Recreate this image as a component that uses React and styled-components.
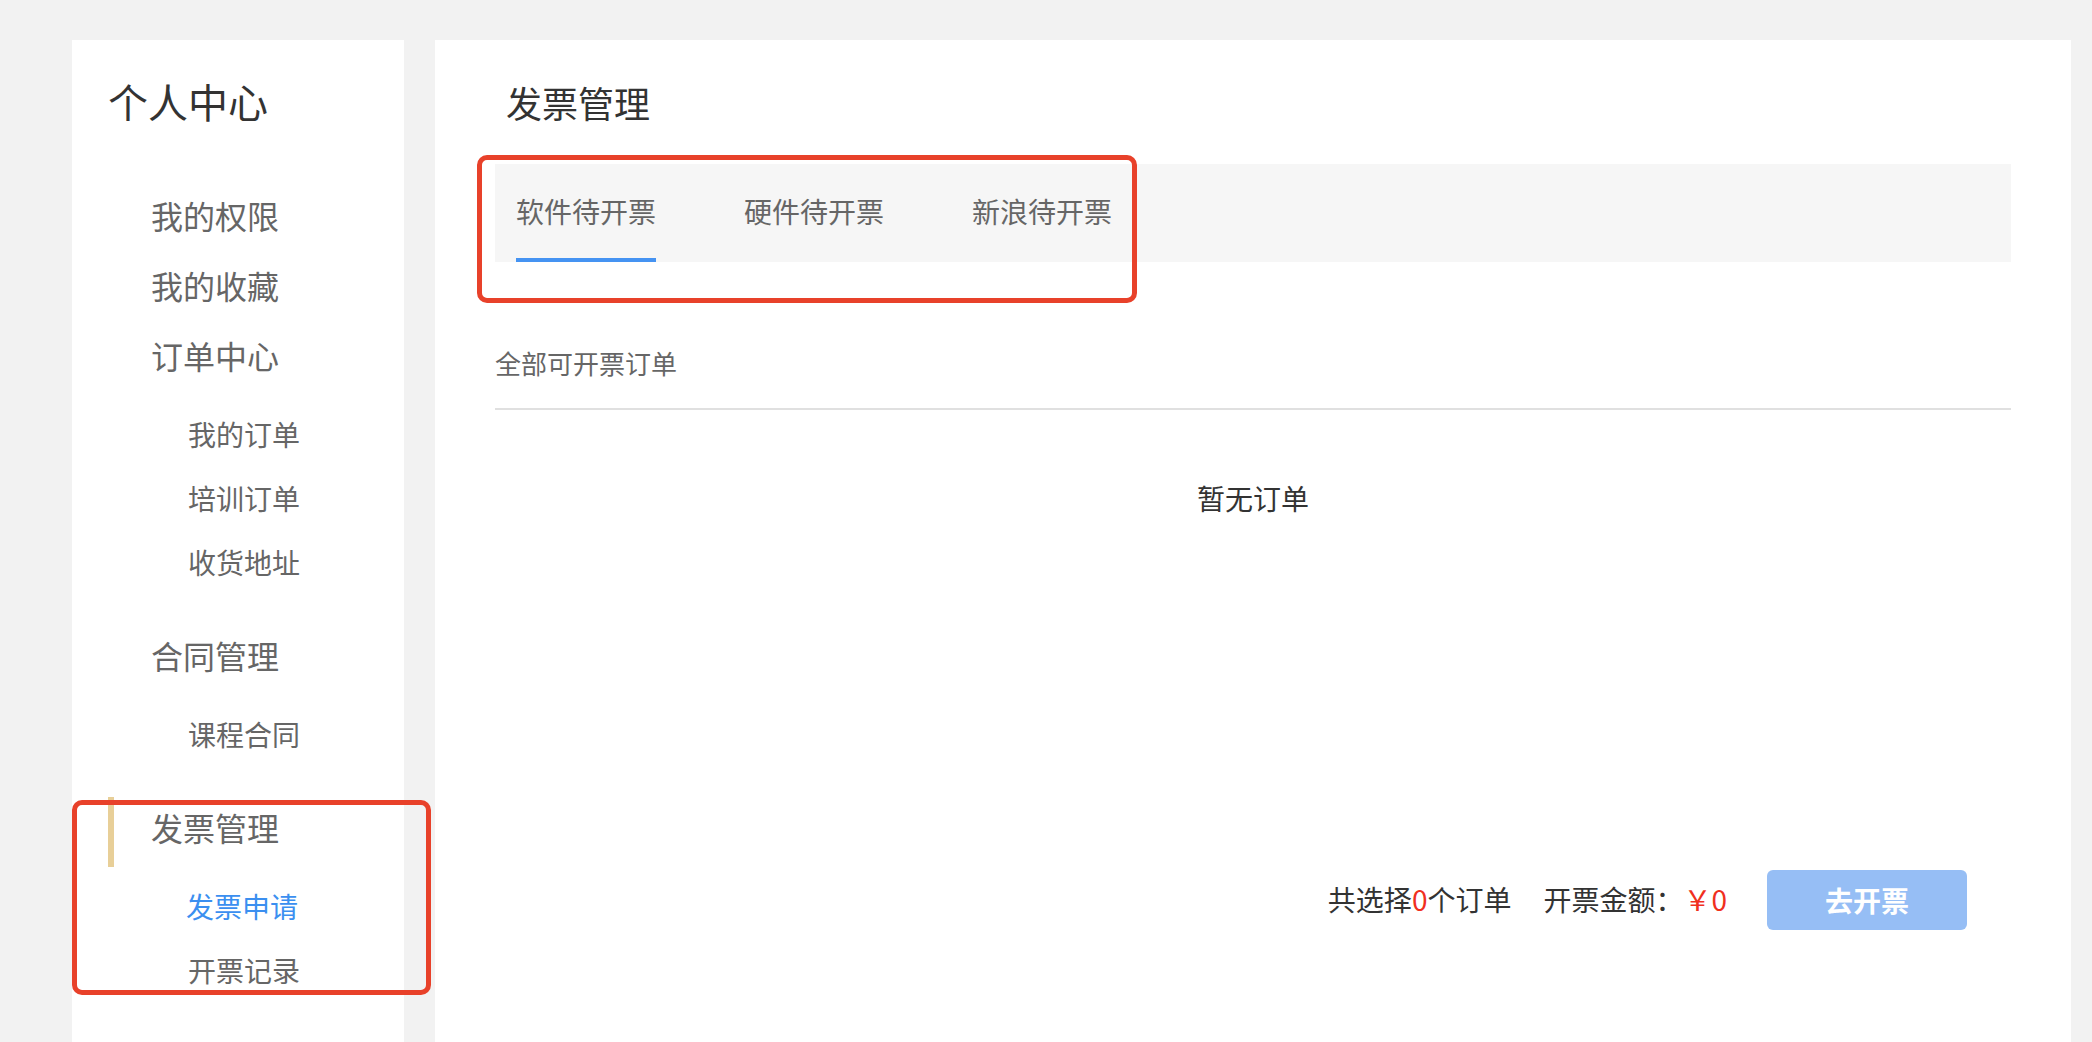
import styled, { createGlobalStyle } from "styled-components";

const GlobalStyle = createGlobalStyle`
  html, body {
    margin: 0;
    padding: 0;
    background: #f2f2f2;
    font-family: "Noto Sans CJK SC", "Noto Sans", sans-serif;
    overflow: hidden;
  }
`;

const Page = styled.div`
  display: flex;
  gap: 31px;
  padding: 40px 21px 0 72px;
  height: 100vh;
  box-sizing: border-box;
`;

const Sidebar = styled.aside`
  width: 332px;
  flex-shrink: 0;
  background: #fff;
  padding: 33px 0 0 36px;
  box-sizing: border-box;
`;

const SideTitle = styled.h2`
  margin: 0;
  font-size: 40px;
  font-weight: 400;
  line-height: 56px;
  color: #333;
`;

const Menu = styled.ul`
  list-style: none;
  margin: 51px 0 0;
  padding: 0;
`;

const Group = styled.li`
  position: relative;
`;

const GroupTitle = styled.div`
  position: relative;
  height: 70px;
  line-height: 70px;
  padding-left: 43px;
  font-size: 32px;
  color: #666;

  &::before {
    content: "";
    display: ${(p) => (p.$active ? "block" : "none")};
    position: absolute;
    left: 0;
    top: 5px;
    width: 6px;
    height: 70px;
    background: #e8cf98;
  }
`;

const SubList = styled.ul`
  list-style: none;
  margin: 0;
  padding: 12px 0 26px;
`;

const SubItem = styled.li`
  height: 64px;
  line-height: 64px;
  padding-left: ${(p) => (p.$active ? 78 : 80)}px;
  font-size: 28px;
  color: ${(p) => (p.$active ? "#3b8ff0" : "#666")};
`;

const Mark = styled.div`
  position: absolute;
  left: ${(p) => p.$left}px;
  top: ${(p) => p.$top}px;
  width: ${(p) => p.$w}px;
  height: ${(p) => p.$h}px;
  border: 5px solid #e8412a;
  border-radius: 10px;
  box-sizing: border-box;
  pointer-events: none;
`;

const Main = styled.main`
  flex: 1;
  background: #fff;
  padding: 37px 60px 0;
  box-sizing: border-box;
`;

const Title = styled.h1`
  margin: 0;
  padding-left: 11px;
  font-size: 36px;
  font-weight: 400;
  line-height: 50px;
  color: #333;
`;

const TabBar = styled.div`
  position: relative;
  display: flex;
  gap: 88px;
  margin-top: 37px;
  height: 98px;
  padding-left: 21px;
  background: #f6f6f6;
`;

const Tab = styled.div`
  height: 98px;
  box-sizing: border-box;
  padding-top: 27px;
  line-height: 40px;
  font-size: 28px;
  color: #666;
  border-bottom: 4px solid ${(p) => (p.$active ? "#4593f2" : "transparent")};
`;

const SectionHead = styled.div`
  margin-top: 81px;
  line-height: 40px;
  padding-bottom: 25px;
  font-size: 26px;
  color: #666;
  border-bottom: 2px solid #e0e0e0;
`;

const Empty = styled.div`
  padding-top: 68px;
  line-height: 40px;
  text-align: center;
  font-size: 28px;
  color: #333;
`;

const Footer = styled.div`
  display: flex;
  align-items: center;
  justify-content: flex-end;
  margin-top: 352px;
  padding-right: 44px;
  height: 60px;
  font-size: 28px;
  color: #333;
`;

const Info = styled.span`
  margin-left: ${(p) => p.$gap || 0}px;
  margin-top: -3px;
`;

const Red = styled.span`
  color: #f0301e;
`;

const Button = styled.button`
  margin-left: 40px;
  width: 200px;
  height: 60px;
  border: none;
  border-radius: 6px;
  background: #96bef5;
  color: #fff;
  font-family: inherit;
  font-size: 28px;
  font-weight: 700;
`;

const groups = [
  { title: "我的权限" },
  { title: "我的收藏" },
  { title: "订单中心", items: ["我的订单", "培训订单", "收货地址"] },
  { title: "合同管理", items: ["课程合同"] },
  { title: "发票管理", items: ["发票申请", "开票记录"], active: true },
];

const tabs = ["软件待开票", "硬件待开票", "新浪待开票"];

export default function App() {
  return (
    <>
      <GlobalStyle />
      <Page>
        <Sidebar>
          <SideTitle>个人中心</SideTitle>
          <Menu>
            {groups.map((g) => (
              <Group key={g.title}>
                <GroupTitle $active={g.active}>{g.title}</GroupTitle>
                {g.items && (
                  <SubList>
                    {g.items.map((it) => (
                      <SubItem key={it} $active={it === "发票申请"}>
                        {it}
                      </SubItem>
                    ))}
                  </SubList>
                )}
                {g.active && <Mark $left={-36} $top={8} $w={359} $h={195} />}
              </Group>
            ))}
          </Menu>
        </Sidebar>
        <Main>
          <Title>发票管理</Title>
          <TabBar>
            {tabs.map((t, i) => (
              <Tab key={t} $active={i === 0}>
                {t}
              </Tab>
            ))}
            <Mark $left={-18} $top={-9} $w={660} $h={148} />
          </TabBar>
          <SectionHead>全部可开票订单</SectionHead>
          <Empty>暂无订单</Empty>
          <Footer>
            <Info>
              共选择<Red>0</Red>个订单
            </Info>
            <Info $gap={32}>
              开票金额：<Red>￥0</Red>
            </Info>
            <Button>去开票</Button>
          </Footer>
        </Main>
      </Page>
    </>
  );
}
